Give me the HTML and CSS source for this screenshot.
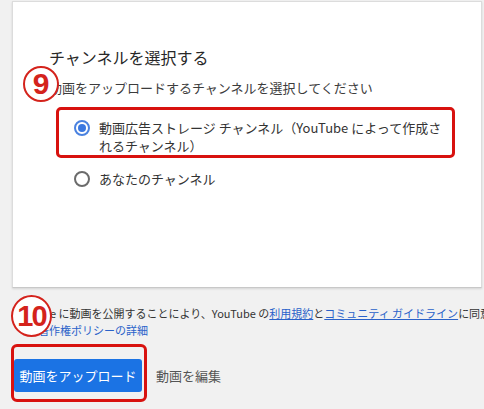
FILE: index.html
```html
<!DOCTYPE html>
<html lang="ja">
<head>
<meta charset="utf-8">
<link rel="stylesheet" href="styles.css">
</head>
<body>
<div class="page">
  <section class="card">
    <h2 class="title">チャンネルを選択する</h2>
    <p class="subtitle">動画をアップロードするチャンネルを選択してください</p>
    <div class="options">
      <div class="option option-marked">
        <span class="radio radio-checked"></span>
        <span class="option-label">動画広告ストレージ チャンネル（YouTube によって作成さ<br>れるチャンネル）</span>
      </div>
      <div class="option option-plain">
        <span class="radio"></span>
        <span class="option-label">あなたのチャンネル</span>
      </div>
    </div>
  </section>

  <div class="terms">
    <div class="terms-line">YouTube に動画を公開することにより、YouTube の<a class="link" href="#">利用規約</a>と<a class="link" href="#">コミュニティ ガイドライン</a>に同意したものとみなされます。</div>
    <div class="terms-line terms-second">本<a class="link plain" href="#">著作権ポリシーの詳細</a></div>
  </div>

  <div class="actions">
    <div class="btn-mark">
      <button class="btn-primary">動画をアップロード</button>
    </div>
    <button class="btn-text">動画を編集</button>
  </div>

  <div class="badge badge-9">9</div>
  <div class="badge badge-10">10</div>
</div>
</body>
</html>
```

FILE: styles.css
```css
html, body {
  margin: 0;
  padding: 0;
}
body {
  background: #f1f1f1;
  font-family: "Noto Sans CJK JP", "Noto Sans", sans-serif;
  color: #333;
  overflow: hidden;
  width: 484px;
  height: 409px;
}
.page {
  position: relative;
  padding: 1px 0 0 12px;
}
.card {
  box-sizing: border-box;
  width: 470px;
  height: 287px;
  background: #fff;
  border: 1px solid #dcdcdc;
  border-bottom-color: #c8c8c8;
  box-shadow: 0 1px 2px rgba(0,0,0,0.12);
  padding: 45px 0 0 36px;
}
.title {
  margin: 0;
  font-size: 16px;
  line-height: 20px;
  font-weight: 400;
  color: #282828;
}
.subtitle {
  margin: 12px 0 0 0;
  font-size: 13px;
  line-height: 18px;
  color: #3c3c3c;
}
.options {
  margin: 10px 0 0 7px;
}
.option {
  display: flex;
  align-items: flex-start;
  font-size: 13px;
  line-height: 18px;
  color: #333;
}
.option-marked {
  box-sizing: border-box;
  width: 399px;
  height: 51px;
  border: 3px solid #d8120f;
  border-radius: 5px;
  padding: 9px 0 0 15px;
}
.option-plain {
  margin-top: 12px;
  padding-left: 18px;
}
.radio {
  box-sizing: border-box;
  flex: none;
  width: 16px;
  height: 16px;
  margin-top: 1px;
  margin-right: 9px;
  border: 2px solid #6b6b6b;
  border-radius: 50%;
  display: flex;
  align-items: center;
  justify-content: center;
}
.radio-checked {
  border-color: #4a82e0;
}
.radio-checked::after {
  content: "";
  width: 8px;
  height: 8px;
  border-radius: 50%;
  background: #3b78e0;
}
.terms {
  width: 472px;
  overflow: hidden;
  margin-top: 17px;
  font-size: 11px;
  line-height: 17px;
  color: #333;
  white-space: nowrap;
}
.terms-second {
  padding-left: 15px;
}
.link {
  color: #2a62c9;
  text-decoration: underline;
}
.link.plain {
  text-decoration: none;
}
.actions {
  display: flex;
  align-items: flex-start;
  margin-top: 5px;
  margin-left: -1px;
}
.btn-mark {
  box-sizing: border-box;
  width: 136px;
  height: 58px;
  border: 3px solid #d8120f;
  border-radius: 6px;
  padding: 12px 2px 0 0;
}
.btn-primary {
  display: block;
  box-sizing: border-box;
  width: 128px;
  height: 33px;
  border: none;
  border-radius: 3px;
  background: #1b73e4;
  color: #fff;
  font-family: "Noto Sans CJK JP", "Noto Sans", sans-serif;
  font-size: 13px;
  padding: 0;
}
.btn-text {
  margin: 23px 0 0 9px;
  padding: 0;
  border: none;
  background: none;
  color: #555;
  font-family: "Noto Sans CJK JP", "Noto Sans", sans-serif;
  font-size: 13px;
  line-height: 18px;
}
.badge {
  position: absolute;
  box-sizing: border-box;
  display: flex;
  align-items: center;
  justify-content: center;
  background: #fff;
  border: 2px solid #d4231c;
  border-radius: 50%;
  color: #d4231c;
  font-family: "Liberation Sans", "DejaVu Sans", sans-serif;
  font-weight: 700;
}
.badge-9 {
  left: 23px;
  top: 66px;
  width: 36px;
  height: 36px;
  font-size: 30px;
}
.badge-10 {
  left: 11px;
  top: 295px;
  width: 41px;
  height: 42px;
  font-size: 29px;
  letter-spacing: -2px;
}
```
